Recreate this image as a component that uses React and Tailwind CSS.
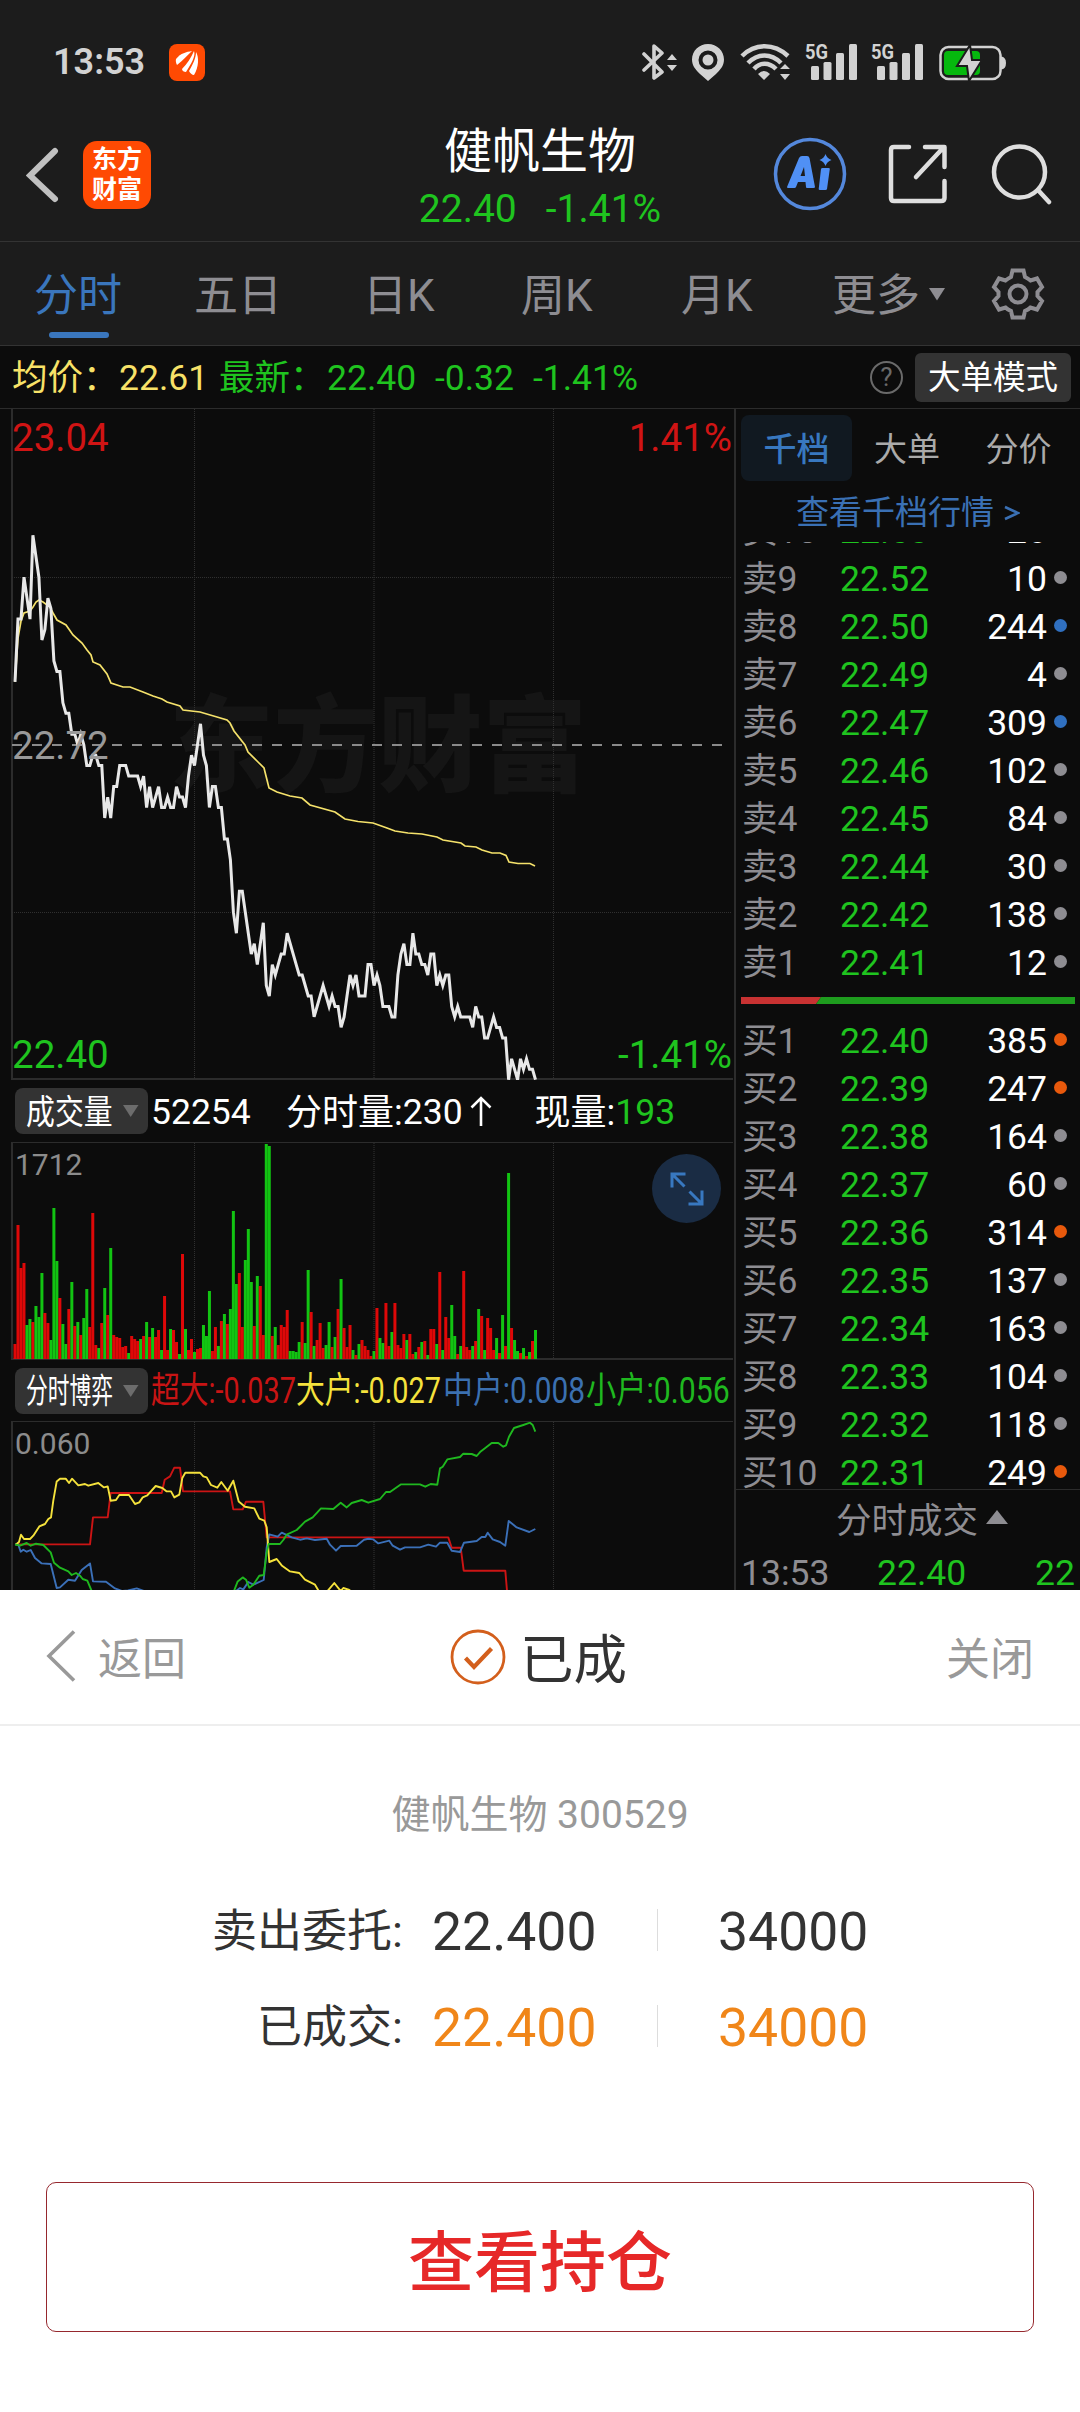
import React from "react";

// price per minute, in cents away from yesterday's close (22.72)
const prices = [
    6, 12, 12, 16, 14, 12, 20, 18, 16, 10, 11, 14, 13, 8, 7, 7, 4, 3, 3, 1, 1, 0, 1, 0, -2, -2, -1, -1, -2, -2,
    -7, -5, -7, -4, -4, -2, -2, -2, -3, -3, -3, -3, -4, -3, -6, -4, -6, -5, -4, -6, -6, -5, -6, -6, -4, -5, -5, -6,
    -3, -1, -2, 0, 2, -1, -2, -6, -4, -4, -6, -6, -9, -9, -11, -16, -18, -14, -14, -16, -18, -20, -19, -21, -19,
    -17, -23, -24, -21, -22, -21, -20, -20, -18, -19, -20, -21, -22, -22, -23, -24, -24, -26, -25, -24, -23, -24,
    -25, -24, -25, -25, -27, -26, -24, -22, -23, -22, -24, -24, -24, -21, -21, -23, -22, -23, -25, -25, -25, -26,
    -26, -22, -20, -19, -21, -21, -18, -20, -20, -21, -21, -22, -20, -20, -23, -22, -23, -22, -22, -25, -26, -25,
    -26, -26, -26, -26, -27, -25, -26, -26, -28, -28, -27, -26, -27, -27, -28, -28, -32, -30, -31, -32, -30, -31,
    -30, -31, -31, -32,
];

const average = "3,273 6,229 9,212 12,204 18,202 21,198 24,193 27,191 31,193 38,198 41,204 45,211 54,216 61,226 70,234 75,241 79,246 81,253 88,256 95,265 99,274 111,278 118,278 131,283 141,287 150,290 155,293 168,297 171,301 188,303 205,308 215,311 218,314 222,322 233,336 236,343 246,353 252,359 257,379 265,383 278,387 290,389 298,396 323,403 333,410 346,412.5 361,414 375,419 383,422 396,424 410,425 425,428 431,431 449,434 453,437 464,438 470,441 480,444 488,444 494,446.5 497,453 506,454.5 518,454.5 523,457";

// volume per minute: colour + bar height
const volumes = (
    "r15 r134 r91 r96 g34 g40 r37 g53 g42 g86 r46 r36 g19 g151 g98 r61 g35 g15 r50 g77 r33 g37 r24 g41 g70 r32 r146 r14 g11 r36 " +
    "g71 r44 g111 r24 r22 r21 r12 r13 g6 r23 r20 r18 g20 r23 g37 r22 g31 r22 r29 g9 r63 r9 g30 r29 r17 g5 r105 g30 r9 r20 " +
    "g7 r10 r11 g34 g23 g68 r8 r32 g13 r38 g45 r35 g50 g148 g75 r86 r32 g99 g130 g77 r33 g83 r73 r24 g215 g213 r23 g32 r14 r34 " +
    "r32 r49 g8 g8 g7 g17 r37 g16 g89 r47 g13 r19 r36 r11 g14 g37 r12 g22 r50 g80 r31 r12 r34 g9 r4 g15 r19 r13 r9 r3 " +
    "g8 r51 g21 g16 r56 r13 g27 r56 r14 r11 r25 g19 r25 r5 g7 r12 g17 r18 g4 r30 r30 g15 r87 g9 r42 r21 g54 g23 r5 g13 " +
    "r88 r12 r9 g13 r18 g50 r43 g9 r41 r31 r9 g21 r6 g44 r13 g186 r31 g19 g8 r6 g11 r3 g7 r18 g29"
).split(" ");

const flows = [
    { color: "#cc1414", points: "3,122.4 78,122.4 81,95.4 95.7,95.4 98.7,71 149.7,71 152.7,57.7 158,54.4 162.3,45.7 168,45.7 171,69.4 218,69.4 221.3,87.4 230.7,87.4 234,79.7 251.3,79.7 254.7,115.4 436.3,115.4 439.7,125.7 448.7,125.7 451.7,148.7 493.3,148.7 495.3,172" },
    { color: "#3b70b8", points: "3,122.4 6.3,122.7 8.7,129.7 11.3,127.7 14.7,129.7 18.7,128 23,136 29.7,141.4 38.7,142 44.7,166 48,165.4 56.3,157.7 63,158.7 69.7,148 78,141.4 81,159.4 94,159.7 103,166.4 110,169 116,168.5 124.7,166.4 132,169 140,176 215,176 224,169 228,166 231.3,167.4 236.3,160 241.3,162.7 251.7,158 254.7,125.4 257.3,112.4 265.7,114.7 269.7,110.7 279.7,115.4 288,117.7 294.7,116.4 303,118 314.7,116.7 318,122.7 324,128.7 328.7,124 344.7,123.7 352,117.7 356.3,116.7 361.3,117.4 366.3,121.4 377.3,118.7 380.7,123.7 388,127.7 393,125.4 408,125.4 416.3,122.7 424,124.7 428,120.7 435.3,120.7 439.7,128.7 448,130 452,120.7 464.7,119 469.7,115 473.3,115 475.7,110.7 480.7,117.4 488,120 493.3,123.7 496.7,99 504.7,105.4 517.3,110 523.3,107" },
    { color: "#f5e23c", points: "4,122.4 7,120 9,112.7 12,117 18,117 21.3,113.7 27.3,104.4 33,102 36.3,97 39,95.4 41.3,78.7 44.7,59.4 48,56.7 53.7,56.7 57,61 60,56.7 66.3,63.4 73,62 76.3,63.7 86.3,61 92,65.4 95.7,64.4 98.7,78.7 104,78 107.3,73 117,73 123,82 127.3,80.4 130.7,75.4 135.3,73.4 143.7,64 150.3,66 154.7,69.4 159,69.4 162.3,75.4 167.3,72.7 170.3,56 173.3,50.7 188,50.7 191.3,54.4 194.7,55.4 199,63 205.3,65.7 209.3,60 215.7,68.7 221.3,58.7 226.7,79.4 233,84.7 242.3,86.4 247.3,96.7 252.3,98.7 254.7,105.4 257.3,140 264.7,137 269.7,143.4 278,149.4 287.3,151 293,157.7 303,162.7 307.3,170 314.7,170 322.3,161 328.7,169 331.3,166 337.3,168 345,174" },
    { color: "#1fb81f", points: "3,122.4 8,123.7 14.7,121 18.7,123.7 24,121.7 31.3,123 38.7,130.4 42,140.7 48,145.7 56.3,149.4 59.7,153 64,151 68,153.7 70.7,157 75.3,158.7 79.7,169 82,176 220,176 222,169 225.7,159.4 230.7,155.4 234,157.7 237.3,165.7 241.3,162.7 247.3,153.7 251.7,153 254.7,130.4 256.7,122 268,122 271.3,118 274.7,112.7 284.7,108 293,99.7 300.7,95.4 309,86.4 321.3,87 328.7,80.7 334.7,85.4 339.7,81 349.7,78 356.3,80.7 368,77 374,70 378,70 388.7,62.4 408,62.4 413.3,64.7 418.7,62 425.3,62.7 428,46.4 430.7,44.7 435.3,37.4 448,35 451.3,31.7 459.7,32 464.7,34 468.7,29.4 472.3,26.7 479.7,21 486.3,21 491.3,24.7 494,23.4 497,14.7 502,6 511.3,3 518,0.7 520.7,3 523.3,9.7" },
];

const sells = [
    ["卖10", "22.53", "26", "n"], ["卖9", "22.52", "10", "n"], ["卖8", "22.50", "244", "b"], ["卖7", "22.49", "4", "n"],
    ["卖6", "22.47", "309", "b"], ["卖5", "22.46", "102", "n"], ["卖4", "22.45", "84", "n"], ["卖3", "22.44", "30", "n"],
    ["卖2", "22.42", "138", "n"], ["卖1", "22.41", "12", "n"],
];

const buys = [
    ["买1", "22.40", "385", "o"], ["买2", "22.39", "247", "o"], ["买3", "22.38", "164", "n"], ["买4", "22.37", "60", "n"],
    ["买5", "22.36", "314", "o"], ["买6", "22.35", "137", "n"], ["买7", "22.34", "163", "n"], ["买8", "22.33", "104", "n"],
    ["买9", "22.32", "118", "n"], ["买10", "22.31", "249", "o"],
];

const dotColors = { n: "bg-[#8e8d92]", b: "bg-[#3070c0]", o: "bg-[#e8590c]" };

const minuteX = (i, total) => 3 + (i * 520.5) / (total - 1);

function Signal() {
    return (
        <svg className="overflow-visible" width="54" height="40" viewBox="0 0 54 40" fill="#d2d2d2">
            <text x="0" y="17" fontSize="20" fontWeight="700" textLength="23" lengthAdjust="spacingAndGlyphs">5G</text>
            <rect x="6" y="24" width="8" height="14" rx="1.5" />
            <rect x="18.5" y="20" width="8" height="18" rx="1.5" />
            <rect x="31" y="11" width="8" height="27" rx="1.5" />
            <rect x="44" y="2" width="8" height="36" rx="1.5" />
        </svg>
    );
}

function StatusBar() {
    return (
        <div className="flex h-[124px] items-center pl-[53px] pr-[73px]">
            <span className="w-[116px] text-[36px] font-semibold leading-none text-[#d2d2d2]">13:53</span>
            <svg width="36" height="37" viewBox="0 0 36 37">
                <rect width="36" height="37" rx="8" fill="#ff4a03" />
                <path d="M7 15C12 9 17 8 23 7C18 12 14 16 8 21C7 19 6.500 17 7 15Z" fill="#fff" />
                <path d="M13 25C18 20 22 14 25 7C27 12 22 20 17 28C15 28 13 27 13 25Z" fill="#fff" />
                <path d="M20 27C24 20 27 14 27 8C30 13 30 23 25 31C23 31 21 29 20 27Z" fill="#fff" />
            </svg>
            <div className="ml-auto flex">
                <svg className="mr-[14px]" width="36" height="40" viewBox="0 0 36 40" fill="none" stroke="#d2d2d2" strokeWidth="3.600">
                    <path d="M2 12L20 30L12 36V4L20 11L2 28" strokeLinejoin="round" strokeLinecap="round" />
                    <path d="M25 18L30 12L35 18ZM25 23L30 29L35 23Z" fill="#d2d2d2" stroke="none" />
                </svg>
                <svg className="mr-[16px]" width="32" height="40" viewBox="0 0 32 40">
                    <path fillRule="evenodd" d="M16 2C7 2 0 9 0 17.500C0 24 4 28 8 32L16 39L24 32C28 28 32 24 32 17.500C32 9 25 2 16 2ZM16 8.500A9.500 9.500 0 1 1 16 27.500A9.500 9.500 0 1 1 16 8.500Z" fill="#d2d2d2" />
                    <circle cx="16" cy="18" r="5.500" fill="#d2d2d2" />
                </svg>
                <svg className="mr-[13px]" width="52" height="40" viewBox="0 0 52 40" fill="none" stroke="#d2d2d2" strokeWidth="4.500">
                    <path d="M2 14C15 1 34 1 48 14" />
                    <path d="M8 21C18 11 31 11 41 21" />
                    <path d="M14 27C20 20 29 20 36 27" />
                    <path d="M18 32Q24 26 30 32L24 38ZM40 27L45 22L50 27ZM40 32L45 38L50 32Z" fill="#d2d2d2" stroke="none" />
                </svg>
                <div className="mr-[12px]"><Signal /></div>
                <div className="mr-[14px]"><Signal /></div>
                <svg width="68" height="40" viewBox="0 0 68 40">
                    <rect x="1.500" y="5" width="60" height="32" rx="8" fill="none" stroke="#d2d2d2" strokeWidth="2.500" />
                    <path d="M62 14.500Q67 15 67 21Q67 27 62 27.500Z" fill="#d2d2d2" />
                    <rect x="5" y="9" width="36" height="24" rx="4" fill="#06b80e" />
                    <path d="M31 3L18 24H28L30 39L43 18H33Z" fill="#d2d2d2" stroke="#1c1c1c" strokeWidth="2" />
                </svg>
            </div>
        </div>
    );
}

function Header() {
    return (
        <div className="flex h-[118px] items-start border-b border-[#333] pl-[26px] pr-[28px]">
            <svg className="mt-[22px]" width="34" height="58" viewBox="0 0 34 58" fill="none" stroke="#c0c0c0" strokeWidth="6" strokeLinecap="round">
                <path d="M29 5L4 29.500L29 53" strokeLinejoin="miter" />
            </svg>
            <div className="ml-[23px] mt-[17px] flex h-[68px] w-[68px] flex-col items-center justify-center rounded-[14px] bg-[#ff4a03] text-[25px] font-bold leading-[30px] text-white">
                <span>东方</span>
                <span>财富</span>
            </div>
            <div className="ml-[268px] flex w-[242px] flex-col items-center pt-[2px]">
                <span className="whitespace-nowrap text-[48px] leading-[52px] text-white">健帆生物</span>
                <div className="flex gap-[29px] whitespace-nowrap text-[39px] leading-[62px] text-[#1fc41f]">
                    <span>22.40</span>
                    <span>-1.41%</span>
                </div>
            </div>
            <svg className="ml-auto mt-[12px]" width="76" height="76" viewBox="0 0 76 76">
                <circle cx="38" cy="38" r="34.500" fill="none" stroke="#5488dc" strokeWidth="3.500" />
                <path fillRule="evenodd" d="M15 51L27 22Q28 20 30 20H35Q37 20 37.500 22L43 51Q43 52 41.500 52H35Q34 52 34 51L33.500 46H26L24 51Q23.500 52 22.500 52H16Q15 52 15 51ZM28.500 40H33L32 31Z" fill="#5090f5" />
                <path d="M49 33Q49.300 32 50.500 32H56.500Q58 32 57.800 33L55 53Q54.700 54 53.500 54H48Q46.500 54 46.700 53ZM53.500 18Q55 22.500 59.500 24Q55 25.500 53.500 30Q52 25.500 47.500 24Q52 22.500 53.500 18Z" fill="#5090f5" />
            </svg>
            <svg className="ml-[39px] mt-[19px]" width="62" height="62" viewBox="0 0 62 62" fill="none" stroke="#dedede" strokeWidth="4.500" strokeLinecap="round" strokeLinejoin="round">
                <path d="M22 4H7Q4 4 4 7V55Q4 58 7 58H54Q57.500 58 57.500 55V38M38 4H57.500V24M56 5L29 34" />
            </svg>
            <svg className="ml-[41px] mt-[19px]" width="62" height="62" viewBox="0 0 62 62" fill="none" stroke="#dedede" strokeWidth="4.500" strokeLinecap="round">
                <circle cx="29.500" cy="29" r="25.500" />
                <path d="M48 47L59 59" />
            </svg>
        </div>
    );
}

function PeriodTabs() {
    return (
        <div className="flex h-[104px] items-center border-b border-[#333] pl-[34px] pr-[35px] text-[44px] text-[#8e8d92]">
            <div className="relative flex h-full w-[160px] items-center pt-[4px] text-[#3a76bd]">
                <span>分时</span>
                <div className="absolute bottom-[7px] left-[15px] h-[6px] w-[60px] rounded-full bg-[#3a76bd]" />
            </div>
            <span className="w-[169px] pt-[4px]">五日</span>
            <span className="w-[158px] pt-[4px]">日K</span>
            <span className="w-[160px] pt-[4px]">周K</span>
            <span className="w-[151px] pt-[4px]">月K</span>
            <span className="w-[97px] pt-[4px]">更多</span>
            <svg width="16" height="14" viewBox="0 0 16 14" fill="#8e8d92"><path d="M0 1H16L8 13.500Z" /></svg>
            <svg className="ml-auto" width="54" height="54" viewBox="0 0 54 54" fill="none" stroke="#8e8d92" strokeWidth="4">
                <path d="M21.500 3.500H32.500L34 10Q37 11.500 39.500 13.500L46 11.500L51 20L46.500 25V29L51 34L46 42.500L39.500 40.500Q37 43 34 44L32.500 50.500H21.500L20 44Q17 43 14.500 40.500L8 42.500L3 34L7.500 29V25L3 20L8 11.500L14.500 13.500Q17 11.500 20 10Z" />
                <circle cx="27" cy="27" r="8.500" />
            </svg>
        </div>
    );
}

function InfoRow() {
    return (
        <div className="flex h-[63px] items-center whitespace-nowrap border-b border-[#2c2c2c] pl-[12px] pr-[9px] text-[35.5px]">
            <span className="w-[107px] pt-[3px] text-[#f8e268]">均价：</span>
            <span className="w-[100px] pt-[3px] text-[#f8e268]">22.61</span>
            <span className="w-[108px] pt-[3px] text-[#1fc41f]">最新：</span>
            <span className="w-[108px] pt-[3px] text-[#1fc41f]">22.40</span>
            <span className="w-[98px] pt-[3px] text-[#1fc41f]">-0.32</span>
            <span className="pt-[3px] text-[#1fc41f]">-1.41%</span>
            <div className="ml-auto flex h-[33px] w-[33px] items-center justify-center rounded-full border-[2.5px] border-[#6a6a6a] text-[26px] leading-none text-[#6a6a6a]">?</div>
            <div className="ml-[12px] flex h-[49px] w-[156px] items-center justify-center rounded-[6px] bg-[#333] pt-[2px] text-[32.5px] text-white">大单模式</div>
        </div>
    );
}

function Grid({ height, rows = [] }) {
    return (
        <g stroke="#303030" strokeWidth="1" strokeDasharray="1 1" shapeRendering="crispEdges">
            {[182.5, 541.5].map((x) => <line key={x} x1={x} x2={x} y1="0" y2={height} />)}
            <line x1="362" x2="362" y1="0" y2={height} stroke="#202020" strokeWidth="2" />
            {rows.map((y) => <line key={y} x1="0" x2="720" y1={y} y2={y} />)}
        </g>
    );
}

function PriceChart() {
    const points = prices.map((p, i) => `${minuteX(i, prices.length).toFixed(1)},${(335.7 - p * 10.47).toFixed(1)}`).join(" ");
    return (
        <div className="relative ml-[11px] h-[671px] w-[722px] border-b-2 border-l-2 border-[#2c2c2c] text-[38.5px] leading-[38px]">
            <span className="absolute left-[156px] top-[281px] whitespace-nowrap text-[104.5px] font-black leading-[116px] text-[#151515]">东方财富</span>
            <svg className="absolute left-[-1px] top-0" width="722" height="671" viewBox="0 0 722 671" fill="none">
                <Grid height={670} rows={[168.5, 503.5]} />
                <line x1="0" x2="720" y1="336" y2="336" stroke="#8a8a8a" strokeWidth="2" strokeDasharray="10 10" />
                <polyline points={average} stroke="#f5e26b" strokeWidth="1.700" />
                <polyline points={points} stroke="#e8e8e8" strokeWidth="3" />
            </svg>
            <span className="absolute left-[-1px] top-[10px] text-[#d01414]">23.04</span>
            <span className="absolute right-[1px] top-[10px] text-[#d01414]">1.41%</span>
            <span className="absolute left-[-1px] top-[318px] text-[#999]">22.72</span>
            <span className="absolute bottom-[4px] left-[-1px] text-[#1fc41f]">22.40</span>
            <span className="absolute bottom-[4px] right-[1px] text-[#1fc41f]">-1.41%</span>
        </div>
    );
}

function Chip({ children }) {
    return (
        <div className="ml-[15px] flex h-[46px] w-[133px] shrink-0 items-center rounded-[8px] bg-[#333] pl-[11px] text-[34px] text-white">
            <div className="w-[97px] pt-[2px]">{children}</div>
            <svg width="16" height="12" viewBox="0 0 16 12" fill="#6c6c6c"><path d="M0 0H15.500L7.700 12Z" /></svg>
        </div>
    );
}

function VolumeChart() {
    return (
        <>
            <div className="flex h-[62px] items-center whitespace-nowrap text-[35.5px] text-white">
                <Chip><span className="inline-block origin-left scale-x-[0.85]">成交量</span></Chip>
                <span className="ml-[3px] w-[135px] pt-[3px]">52254</span>
                <span className="pt-[3px] text-[36px]">分时量:</span>
                <span className="pt-[3px]">230</span>
                <svg className="ml-[7px]" width="22" height="32" viewBox="0 0 22 32" fill="none" stroke="#fff" strokeWidth="2.600"><path d="M11 31V3M1.500 12.500L11 3L20.500 12.500" /></svg>
                <span className="ml-[43px] pt-[3px] text-[36px]">现量:</span>
                <span className="pt-[3px] text-[#1fc41f]">193</span>
            </div>
            <div className="relative ml-[11px] h-[218px] w-[722px] border-b-2 border-l-2 border-t border-[#2c2c2c]">
                <svg className="absolute left-[-1px] top-0" width="722" height="217" viewBox="0 0 722 217">
                    <Grid height={216} />
                    {volumes.map((v, i) => {
                        const h = Number(v.slice(1));
                        return <rect key={i} x={minuteX(i, volumes.length) - 1.5} y={216 - h} width="3" height={h} fill={v[0] === "r" ? "#de0808" : "#12c412"} />;
                    })}
                </svg>
                <span className="absolute left-[2px] top-[5px] text-[30px] leading-[34px] text-[#8c8c8c]">1712</span>
                <div className="absolute right-[12px] top-[11px] flex h-[69px] w-[69px] items-center justify-center rounded-full bg-[#1a2c44]">
                    <svg width="34" height="34" viewBox="0 0 34 34" fill="none" stroke="#3878c0" strokeWidth="3">
                        <path d="M2 15.500V2H15.500M2 2L14.500 14.500M32 18.500V32H18.500M32 32L19.500 19.500" />
                    </svg>
                </div>
            </div>
        </>
    );
}

function FlowChart() {
    return (
        <>
            <div className="flex h-[61px] items-center whitespace-nowrap text-[36px]">
                <Chip><span className="inline-block origin-left scale-x-[0.64]">分时博弈</span></Chip>
                <div className="ml-[3px] w-[145px] text-[#c81414]"><span className="inline-block origin-left scale-x-[0.8]">超大:-0.037</span></div>
                <div className="w-[147px] text-[#f5e23c]"><span className="inline-block origin-left scale-x-[0.8]">大户:-0.027</span></div>
                <div className="w-[143px] text-[#3b70b0]"><span className="inline-block origin-left scale-x-[0.83]">中户:0.008</span></div>
                <div className="text-[#1fb81f]"><span className="inline-block origin-left scale-x-[0.84]">小户:0.056</span></div>
            </div>
            <div className="relative ml-[11px] h-[169px] w-[722px] overflow-hidden border-l-2 border-t border-[#2c2c2c]">
                <svg className="absolute left-[-1px] top-0" width="722" height="169" viewBox="0 0 722 169" fill="none">
                    <Grid height={169} />
                    {flows.map((f) => <polyline key={f.color} points={f.points} stroke={f.color} strokeWidth="1.900" strokeLinejoin="round" />)}
                </svg>
                <span className="absolute left-[2px] top-[5px] text-[30px] leading-[34px] text-[#8c8c8c]">0.060</span>
            </div>
        </>
    );
}

function QuoteRow({ row }) {
    const [label, price, amount, dot] = row;
    return (
        <div className="flex h-[48px] shrink-0 items-center">
            <span className="w-[98px] text-[#8e8d92]">{label}</span>
            <span className="w-[100px] text-[#1fc41f]">{price}</span>
            <span className="ml-auto text-white">{amount}</span>
            <div className={`mb-[5px] ml-[7px] h-[13px] w-[13px] rounded-full ${dotColors[dot]}`} />
        </div>
    );
}

function OrderBook() {
    return (
        <div className="flex w-[346px] flex-col whitespace-nowrap border-l-2 border-[#2c2c2c]">
            <div className="flex pl-[5px] pt-[6px] text-[33px] text-[#aaa]">
                <div className="flex h-[66px] w-[111px] items-center justify-center rounded-[8px] bg-[#111921] pt-[4px] font-medium text-[#3878c0]">千档</div>
                <div className="flex w-[110px] items-center justify-center pt-[4px]">大单</div>
                <div className="flex w-[113px] items-center justify-center pt-[4px]">分价</div>
            </div>
            <div className="flex h-[61px] items-center pl-[60px] pt-[3px] text-[33px] text-[#3a70b4]">
                <span>查看千档行情</span>
                <svg className="ml-[10px]" width="16" height="16" viewBox="0 0 16 16" fill="none" stroke="#3a70b4" strokeWidth="2.600"><path d="M1 2L14 8L1 14" /></svg>
            </div>
            <div className="flex h-[949px] flex-col justify-end overflow-hidden border-b border-[#2c2c2c] pl-[6px] pr-[13px] text-[35.5px]">
                {sells.map((row) => <QuoteRow key={row[0]} row={row} />)}
                <svg className="mb-[14px] ml-[-1px] mt-[9px] shrink-0" width="334" height="7" viewBox="0 0 334 7">
                    <path d="M0 0H80L75 7H0Z" fill="#c83232" />
                    <path d="M80 0H334V7H75Z" fill="#1e9c1e" />
                </svg>
                {buys.map((row) => <QuoteRow key={row[0]} row={row} />)}
                <div className="-mb-[9px] shrink-0" />
            </div>
            <div className="flex h-[60px] items-center pl-[100px] pt-[3px] text-[35.5px] text-[#8e8d92]">
                <span>分时成交</span>
                <svg className="mb-[9px] ml-[8px]" width="22" height="14" viewBox="0 0 22 14" fill="#8e8d92"><path d="M0 14L11 0L22 14Z" /></svg>
            </div>
            <div className="flex h-[40px] items-center pl-[5px] pr-[5px] pt-[8px] text-[35.5px] text-[#1fc41f]">
                <span className="w-[136px] text-[#8e8d92]">13:53</span>
                <span>22.40</span>
                <span className="ml-auto">22</span>
            </div>
        </div>
    );
}

function DealRow({ label, price, amount, color }) {
    return (
        <div className={`flex h-[96px] items-center text-[53.5px] ${color}`}>
            <span className="w-[403px] pt-[4px] text-right text-[45px] text-[#333]">{label}</span>
            <span className="ml-[29px] w-[225px] pt-[4px]">{price}</span>
            <div className="h-[42px] w-px bg-[#ddd]" />
            <span className="ml-[60px] pt-[4px]">{amount}</span>
        </div>
    );
}

function ResultSheet() {
    return (
        <div className="flex h-[822px] flex-col bg-white">
            <div className="flex h-[136px] items-center border-b-2 border-[#eee] px-[46px] text-[44px] text-[#999]">
                <svg className="mt-[-2px]" width="30" height="52" viewBox="0 0 30 52" fill="none" stroke="#999" strokeWidth="3.600"><path d="M28 1.500L3 26L28 50.500" /></svg>
                <span className="ml-[22px] pt-[6px]">返回</span>
                <div className="ml-[264px] flex items-center">
                    <svg width="56" height="56" viewBox="0 0 56 56" fill="none" stroke="#d35f1c">
                        <circle cx="28" cy="28" r="26" strokeWidth="2.800" />
                        <path d="M15.500 29L24 38L41.500 19.500" strokeWidth="4.200" />
                    </svg>
                    <span className="ml-[14px] pt-[8px] text-[53.5px] leading-[60px] text-[#333]">已成</span>
                </div>
                <span className="ml-auto pt-[6px]">关闭</span>
            </div>
            <div className="mt-[63px] text-center text-[39px] leading-[52px] text-[#999]">健帆生物 300529</div>
            <div className="mt-[41px] flex flex-col">
                <DealRow label="卖出委托:" price="22.400" amount="34000" color="text-[#333]" />
                <DealRow label="已成交:" price="22.400" amount="34000" color="text-[#f08619]" />
            </div>
            <button className="mx-[46px] mt-[108px] h-[150px] rounded-[10px] border border-[#96282e] pt-[12px] text-[66px] font-medium text-[#e62828]">查看持仓</button>
        </div>
    );
}

export default function App() {
    return (
        <div className="h-[2412px] w-[1080px] overflow-hidden bg-[#0c0c0c] font-[Roboto,'Noto_Sans_CJK_SC',sans-serif]">
            <div className="bg-[#1c1c1c]">
                <StatusBar />
                <Header />
                <PeriodTabs />
            </div>
            <InfoRow />
            <div className="flex h-[1181px] overflow-hidden">
                <div className="w-[734px]">
                    <PriceChart />
                    <VolumeChart />
                    <FlowChart />
                </div>
                <OrderBook />
            </div>
            <ResultSheet />
        </div>
    );
}
